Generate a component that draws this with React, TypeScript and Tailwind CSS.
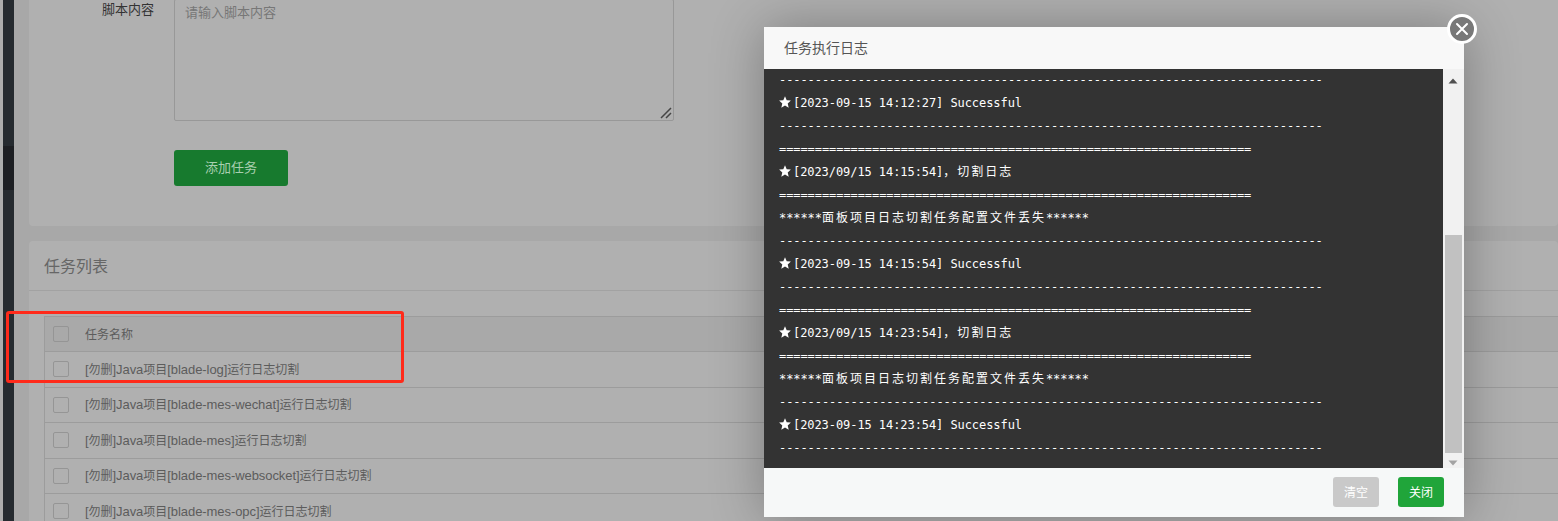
const tasks = [
  "[勿删]Java项目[blade-log]运行日志切割",
  "[勿删]Java项目[blade-mes-wechat]运行日志切割",
  "[勿删]Java项目[blade-mes]运行日志切割",
  "[勿删]Java项目[blade-mes-websocket]运行日志切割",
  "[勿删]Java项目[blade-mes-opc]运行日志切割",
];

const dash = "-".repeat(76);
const equal = "=".repeat(66);

function Star() {
  return (
    <span className="inline-block w-[14px] align-[-1px]">
      <svg width="12" height="12" viewBox="0 0 12 12">
        <path d="M6 0.3 L7.7 4.3 L11.9 4.6 L8.7 7.4 L9.7 11.7 L6 9.4 L2.3 11.7 L3.3 7.4 L0.1 4.6 L4.3 4.3 Z" fill="#ffffff" />
      </svg>
    </span>
  );
}

function Cjk({ children }: { children: string }) {
  return <span className="tracking-[2px]">{children}</span>;
}

function Line({ children }: { children: React.ReactNode }) {
  return <div className="h-[23px] leading-[23px] whitespace-pre">{children}</div>;
}

function Missing() {
  return (
    <Line>
      ******<Cjk>面板项目日志切割任务配置文件丢失</Cjk>******
    </Line>
  );
}

function LogPanel() {
  return (
    <div className="flex-1 bg-[#333333] pl-[15px] text-white text-[12px] tracking-[-0.07px] overflow-hidden font-['DejaVu_Sans_Mono','Noto_Sans_CJK_SC',monospace]">
      <Line>{dash}</Line>
      <Line><Star />[2023-09-15 14:12:27] Successful</Line>
      <Line>{dash}</Line>
      <Line>{equal}</Line>
      <Line><Star />[2023/09/15 14:15:54]<Cjk>，切割日志</Cjk></Line>
      <Line>{equal}</Line>
      <Missing />
      <Line>{dash}</Line>
      <Line><Star />[2023-09-15 14:15:54] Successful</Line>
      <Line>{dash}</Line>
      <Line>{equal}</Line>
      <Line><Star />[2023/09/15 14:23:54]<Cjk>，切割日志</Cjk></Line>
      <Line>{equal}</Line>
      <Missing />
      <Line>{dash}</Line>
      <Line><Star />[2023-09-15 14:23:54] Successful</Line>
      <Line>{dash}</Line>
    </div>
  );
}

function ScrollBar() {
  return (
    <div className="w-[21px] bg-[#f1f1f1] flex flex-col items-center">
      <svg width="10" height="6" viewBox="0 0 10 6" className="mt-[9px] -ml-[2px]">
        <path d="M5 0.5 L9.5 5.5 L0.5 5.5 Z" fill="#505050" />
      </svg>
      <div className="w-[17px] h-[218px] bg-[#c1c1c1] mt-[151px] -ml-[1px]" />
      <svg width="10" height="6" viewBox="0 0 10 6" className="mt-[7px] -ml-[2px]">
        <path d="M5 5.5 L9.5 0.5 L0.5 0.5 Z" fill="#a3a3a3" />
      </svg>
    </div>
  );
}

function LogModal() {
  return (
    <div className="absolute left-[764px] top-[27px] w-[700px] h-[490px] flex flex-col shadow-[1px_1px_50px_rgba(0,0,0,0.3)]">
      <div className="h-[42px] shrink-0 bg-[#f8f8f8] pl-[20px] pb-[2px] flex items-center text-[14px] text-[#555555]">
        任务执行日志
      </div>
      <div className="flex h-[399px] shrink-0">
        <LogPanel />
        <ScrollBar />
      </div>
      <div className="flex-1 bg-[#f6f8f8] flex justify-end items-start gap-[19px] pt-[9px] pr-[20px]">
        <button className="w-[46px] h-[30px] pt-[2px] rounded-[3px] bg-[#c9c9c9] text-white text-[12px]">清空</button>
        <button className="w-[46px] h-[30px] pt-[2px] rounded-[3px] bg-[#20a53a] text-white text-[12px]">关闭</button>
      </div>
      <button className="absolute left-[683px] -top-[13px] w-[30px] h-[30px] rounded-full border-[3px] border-white bg-[#787878] flex items-center justify-center">
        <svg width="14" height="14" viewBox="0 0 14 14">
          <path d="M2 2 L12 12 M12 2 L2 12" stroke="#ffffff" strokeWidth="2" strokeLinecap="round" />
        </svg>
      </button>
    </div>
  );
}

// latin runs are a size larger than the chinese ones in this table
function TaskLabel({ text, header }: { text: string; header?: boolean }) {
  const parts = text.split(/([\u4e00-\u9fff]+)/).filter(Boolean);
  return (
    <span
      className={
        header
          ? "pt-[2px] text-[13px] text-[#5c5c5c] whitespace-pre font-['Liberation_Sans','Noto_Sans_CJK_SC',sans-serif]"
          : "text-[13px] text-[#5c5c5c] whitespace-pre font-['Liberation_Sans','Noto_Sans_CJK_SC',sans-serif]"
      }
    >
      {parts.map((p, i) =>
        /[\u4e00-\u9fff]/.test(p) ? (
          <span key={i} className="text-[12px]">{p}</span>
        ) : (
          <span key={i} className="tracking-[-0.07px]">{p}</span>
        )
      )}
    </span>
  );
}

function TaskRow({ label, header }: { label: string; header?: boolean }) {
  return (
    <div
      className={
        header
          ? "h-[35px] flex items-center border-b border-[#9c9c9c] bg-[#a9a9a9] pl-[8px]"
          : "h-[35.5px] flex items-center border-b border-[#9c9c9c] pl-[8px]"
      }
    >
      <span className="w-[16px] h-[16px] rounded-[2px] border border-[#959595] mr-[16px]" />
      <TaskLabel text={label} header={header} />
    </div>
  );
}

export default function App() {
  return (
    <div className="relative h-[521px] overflow-hidden flex bg-[#a8a8a8] font-['Open_Sans','Noto_Sans_CJK_SC',sans-serif]">
      <div className="w-[3px] shrink-0 bg-[#adadad]" />
      <div className="w-[11px] shrink-0 bg-[#262b30] flex flex-col">
        <div className="h-[146px]" />
        <div className="h-[44px] bg-[#1d1f23]" />
      </div>
      <div className="flex-1 pl-[15px] min-w-0">
        <div className="h-[226px] rounded-b-[4px] bg-[#b0b0b0] flex flex-col">
          <div className="flex -mt-px">
            <div className="w-[125px] text-right text-[13px] leading-[20px] text-[#333333]">脚本内容</div>
            <div className="relative ml-[20px] w-[500px] h-[122px]">
              <textarea
                placeholder="请输入脚本内容"
                className="w-full h-full block resize-none border border-[#989898] rounded-[2px] px-[10px] pt-[3px] text-[13px] leading-[18px] placeholder:text-[#777777]"
              />
              <svg width="12" height="12" viewBox="0 0 12 12" className="absolute right-[2px] bottom-[2px] pointer-events-none">
                <path d="M1 11 L11 1 M6 11 L11 6" stroke="#454545" strokeWidth="1.5" />
              </svg>
            </div>
          </div>
          <button className="ml-[145px] mt-[29px] w-[114px] h-[36px] rounded-[3px] bg-[#177a2e] text-[#a9cfb0] text-[13px]">
            添加任务
          </button>
        </div>
        <div className="mt-[15px] h-[300px] rounded-t-[4px] bg-[#b0b0b0]">
          <div className="h-[50px] border-b border-[#a2a2a2] pl-[15px] flex items-center text-[16px] text-[#666666]">
            任务列表
          </div>
          <div className="ml-[15px] mt-[25px] border-l border-t border-[#9c9c9c]">
            <TaskRow label="任务名称" header />
            {tasks.map((t) => (
              <TaskRow key={t} label={t} />
            ))}
          </div>
        </div>
      </div>
      <div className="absolute left-[6px] top-[311px] w-[398px] h-[72px] rounded-[3px] border-[3px] border-[#ff2a1a]" />
      <LogModal />
    </div>
  );
}
